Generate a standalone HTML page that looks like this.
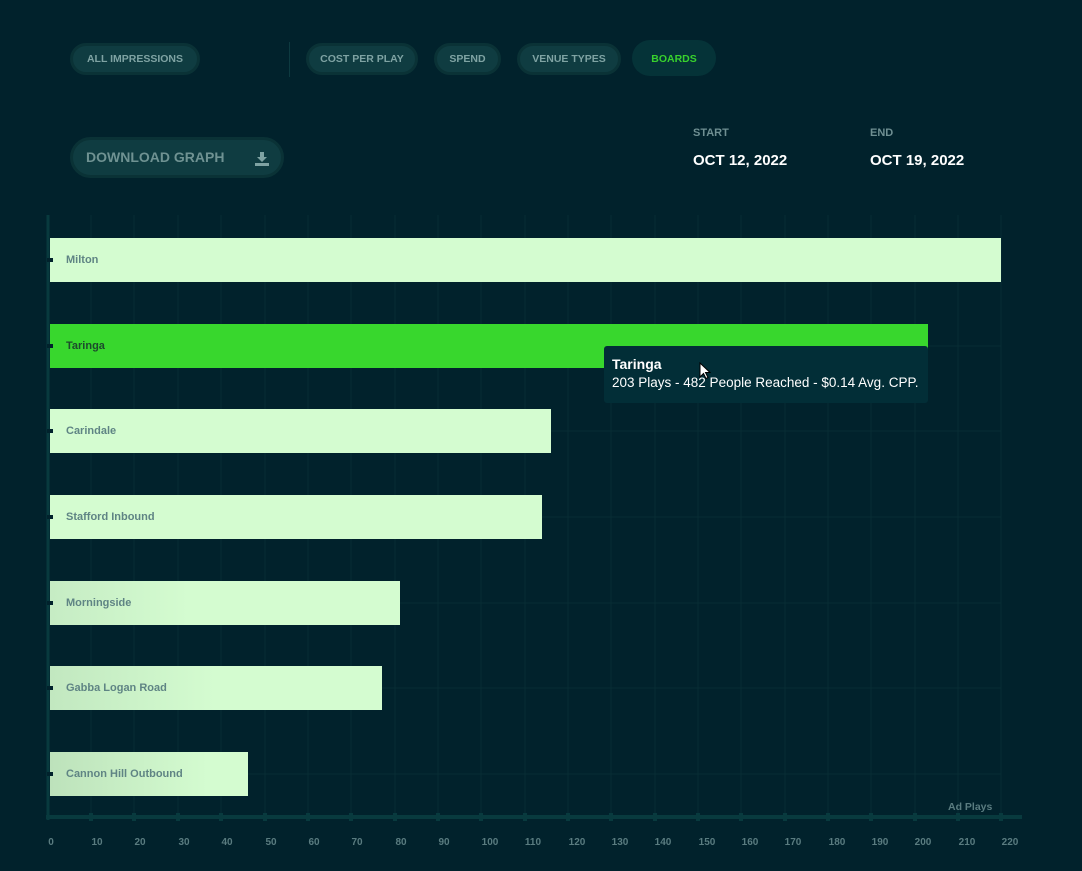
<!DOCTYPE html>
<html><head><style>
*{margin:0;padding:0;box-sizing:border-box}
body{width:1082px;height:871px;background:#01222c;font-family:"Liberation Sans",sans-serif;position:relative;overflow:hidden}
.pill{position:absolute;top:43px;height:32px;border-radius:16px;background:#0f3c41;border:3px solid #0a3236;color:#7fa3a3;font-weight:bold;font-size:10.5px;line-height:26px;text-align:center;letter-spacing:0;white-space:nowrap}
.abs{position:absolute}
.bar{position:absolute;left:50px;height:44px;background:#d4fcd0}
.bl{position:absolute;left:66px;font-size:11px;font-weight:bold;color:#5f8484;line-height:44px;top:1px}
.tk{position:absolute;left:47px;width:6px;height:4px;background:#01222c}
.ax{position:absolute;top:837px;font-size:10px;font-weight:bold;color:#5a7c80;width:30px;text-align:center}
</style></head><body>
<div class="pill" style="left:70px;width:130px">ALL IMPRESSIONS</div>
<div class="abs" style="left:289px;top:42px;width:1px;height:35px;background:#0d3a40"></div>
<div class="pill" style="left:306px;width:112px">COST PER PLAY</div>
<div class="pill" style="left:434px;width:67px">SPEND</div>
<div class="pill" style="left:517px;width:104px">VENUE TYPES</div>
<div class="pill" style="left:632px;width:84px;top:40px;height:36px;line-height:38px;border:none;background:#053338;color:#38d12d;border-radius:18px">BOARDS</div>

<div class="pill" style="left:70px;top:137px;width:214px;height:41px;border-radius:21px;line-height:35px;font-size:14px;text-align:left;padding-left:13px;color:#6f9292">DOWNLOAD GRAPH
<svg class="abs" style="left:181px;top:11px" width="16" height="16" viewBox="0 0 16 16"><path d="M6 1h4v5h3l-5 5-5-5h3z" fill="#7fa3a3"/><rect x="1" y="12" width="14" height="3" fill="#7fa3a3"/></svg></div>

<div class="abs" style="left:693px;top:127px;font-size:11px;font-weight:bold;color:#6f8f92">START</div>
<div class="abs" style="left:693px;top:152px;font-size:15px;font-weight:bold;color:#fff">OCT 12, 2022</div>
<div class="abs" style="left:870px;top:127px;font-size:11px;font-weight:bold;color:#6f8f92">END</div>
<div class="abs" style="left:870px;top:152px;font-size:15px;font-weight:bold;color:#fff">OCT 19, 2022</div>

<svg class="abs" style="left:0;top:0" width="1082" height="871">
<g stroke="#072c34" stroke-width="1">
<line x1="91" y1="215" x2="91" y2="817"/><line x1="134" y1="215" x2="134" y2="817"/><line x1="178" y1="215" x2="178" y2="817"/><line x1="221" y1="215" x2="221" y2="817"/><line x1="265" y1="215" x2="265" y2="817"/><line x1="308" y1="215" x2="308" y2="817"/><line x1="351" y1="215" x2="351" y2="817"/><line x1="395" y1="215" x2="395" y2="817"/><line x1="438" y1="215" x2="438" y2="817"/><line x1="481" y1="215" x2="481" y2="817"/><line x1="525" y1="215" x2="525" y2="817"/><line x1="568" y1="215" x2="568" y2="817"/><line x1="611" y1="215" x2="611" y2="817"/><line x1="655" y1="215" x2="655" y2="817"/><line x1="698" y1="215" x2="698" y2="817"/><line x1="741" y1="215" x2="741" y2="817"/><line x1="785" y1="215" x2="785" y2="817"/><line x1="828" y1="215" x2="828" y2="817"/><line x1="871" y1="215" x2="871" y2="817"/><line x1="915" y1="215" x2="915" y2="817"/><line x1="958" y1="215" x2="958" y2="817"/><line x1="1001" y1="215" x2="1001" y2="817"/>
<line x1="48" y1="260" x2="1001" y2="260"/><line x1="48" y1="346" x2="1001" y2="346"/><line x1="48" y1="431" x2="1001" y2="431"/><line x1="48" y1="517" x2="1001" y2="517"/><line x1="48" y1="603" x2="1001" y2="603"/><line x1="48" y1="688" x2="1001" y2="688"/><line x1="48" y1="774" x2="1001" y2="774"/>
</g>
<line x1="48" y1="215" x2="48" y2="820" stroke="#083a3e" stroke-width="3"/>
<line x1="46" y1="817" x2="1022" y2="817" stroke="#083a3e" stroke-width="4"/>
<g fill="#083a3e"><rect x="89" y="813" width="4" height="8"/><rect x="132" y="813" width="4" height="8"/><rect x="176" y="813" width="4" height="8"/><rect x="219" y="813" width="4" height="8"/><rect x="263" y="813" width="4" height="8"/><rect x="306" y="813" width="4" height="8"/><rect x="349" y="813" width="4" height="8"/><rect x="393" y="813" width="4" height="8"/><rect x="436" y="813" width="4" height="8"/><rect x="479" y="813" width="4" height="8"/><rect x="523" y="813" width="4" height="8"/><rect x="566" y="813" width="4" height="8"/><rect x="609" y="813" width="4" height="8"/><rect x="653" y="813" width="4" height="8"/><rect x="696" y="813" width="4" height="8"/><rect x="739" y="813" width="4" height="8"/><rect x="783" y="813" width="4" height="8"/><rect x="826" y="813" width="4" height="8"/><rect x="869" y="813" width="4" height="8"/><rect x="913" y="813" width="4" height="8"/><rect x="956" y="813" width="4" height="8"/><rect x="999" y="813" width="4" height="8"/></g>
</svg>

<div class="bar" style="top:238px;width:951px"></div><div class="tk" style="top:258px"></div><div class="bl" style="top:238px">Milton</div>
<div class="bar" style="top:324px;width:878px;background:#38d72d"></div><div class="tk" style="top:344px"></div><div class="bl" style="top:324px;color:#1c4a2c">Taringa</div>
<div class="bar" style="top:409px;width:501px"></div><div class="tk" style="top:429px"></div><div class="bl" style="top:409px">Carindale</div>
<div class="bar" style="top:495px;width:492px"></div><div class="tk" style="top:515px"></div><div class="bl" style="top:495px">Stafford Inbound</div>
<div class="bar" style="top:581px;width:350px;background:linear-gradient(90deg,#c6ecc4,#d4fcd0 40%)"></div><div class="tk" style="top:601px"></div><div class="bl" style="top:581px">Morningside</div>
<div class="bar" style="top:666px;width:332px;background:linear-gradient(90deg,#c2e8c0,#d4fcd0 50%)"></div><div class="tk" style="top:686px"></div><div class="bl" style="top:666px">Gabba Logan Road</div>
<div class="bar" style="top:752px;width:198px;background:linear-gradient(90deg,#bde2bb,#d4fcd0 80%)"></div><div class="tk" style="top:772px"></div><div class="bl" style="top:752px">Cannon Hill Outbound</div>

<div class="abs" style="left:604px;top:346px;width:324px;height:57px;background:#022e37;border-radius:3px;color:#fff;padding:10px 8px">
<div style="font-weight:bold;font-size:14px;line-height:16px">Taringa</div>
<div style="font-size:13.5px;line-height:22px;white-space:nowrap">203 Plays - 482 People Reached - $0.14 Avg. CPP.</div></div>
<svg class="abs" style="left:699px;top:362px" width="12" height="18" viewBox="0 0 12 18"><path d="M1 1v14l3.5-3.5 2.5 5 2-1-2.5-5H11z" fill="#fff" stroke="#000" stroke-width="1"/></svg>

<div class="abs" style="left:948px;top:801px;font-size:10.5px;font-weight:bold;color:#5a7c80">Ad Plays</div>
<div class="ax" style="left:36px">0</div><div class="ax" style="left:82px">10</div><div class="ax" style="left:125px">20</div><div class="ax" style="left:169px">30</div><div class="ax" style="left:212px">40</div><div class="ax" style="left:256px">50</div><div class="ax" style="left:299px">60</div><div class="ax" style="left:342px">70</div><div class="ax" style="left:386px">80</div><div class="ax" style="left:429px">90</div><div class="ax" style="left:475px">100</div><div class="ax" style="left:518px">110</div><div class="ax" style="left:562px">120</div><div class="ax" style="left:605px">130</div><div class="ax" style="left:648px">140</div><div class="ax" style="left:692px">150</div><div class="ax" style="left:735px">160</div><div class="ax" style="left:778px">170</div><div class="ax" style="left:822px">180</div><div class="ax" style="left:865px">190</div><div class="ax" style="left:908px">200</div><div class="ax" style="left:952px">210</div><div class="ax" style="left:995px">220</div>
</body></html>
